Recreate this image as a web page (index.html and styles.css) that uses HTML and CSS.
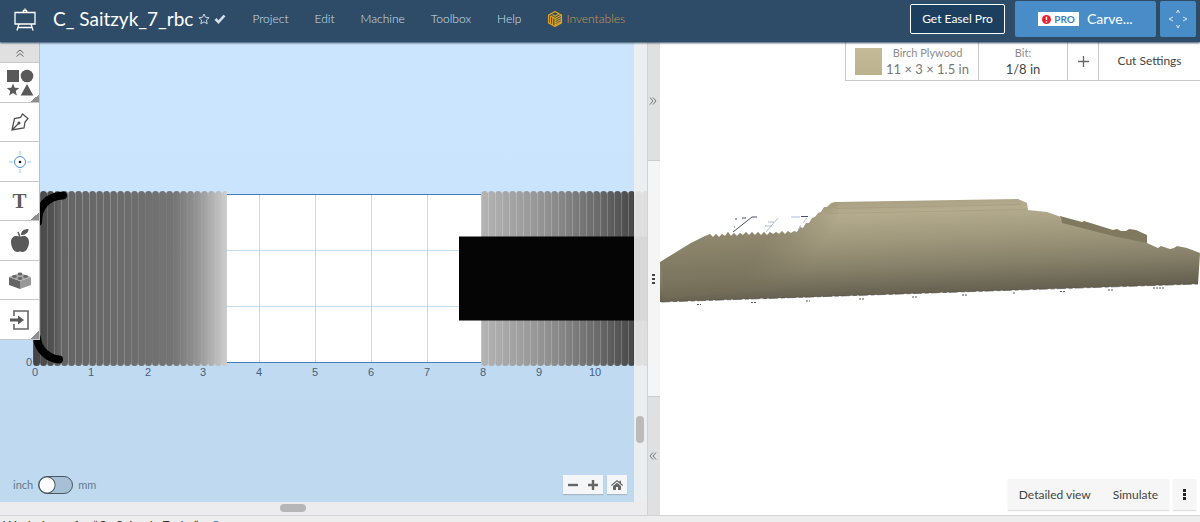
FILE: index.html
```html
<!DOCTYPE html>
<html lang="en">
<head>
<meta charset="utf-8">
<title>Easel</title>
<link rel="stylesheet" href="styles.css">
</head>
<body>
<header class="topbar">
  <svg class="logo" width="24" height="24" viewBox="0 0 24 24" aria-label="Easel"><path d="M2 4.500h20v11.500H2zM10 4.500l.5-2h3l.5 2M12 .5v2M6 16l-2 6.500M18 16l2 6.500M5 19.500h14"/></svg>
  <h1 class="title">C_ Saitzyk_7_rbc</h1>
  <button class="plain" aria-label="Favourite"><svg width="12" height="12" viewBox="0 0 12 12"><path class="star" d="M6 1l1.500 3.300 3.600.4-2.700 2.400.8 3.600L6 8.900l-3.200 1.800.8-3.600L.9 4.700l3.600-.4z"/></svg></button>
  <svg class="saved" width="12" height="12" viewBox="0 0 12 12" aria-hidden="true"><path d="M1.500 6l3 3.200L10.500 2.500"/></svg>
  <nav class="menu">
    <a href="#">Project</a>
    <a href="#">Edit</a>
    <a href="#">Machine</a>
    <a href="#">Toolbox</a>
    <a href="#">Help</a>
    <a href="#" class="brand"><svg width="16" height="16" viewBox="0 0 16 16"><path d="M8 .5l6.500 3.700v7.600L8 15.500l-6.500-3.700V4.200zM8 8v7.500M3.500 5v7.500M5.700 6v7.500M3.500 4.700L8 7.500l6.500-3.600M5.500 3.500L8 5.200l4-2.400M8 9.800l6-3.300M8 12l6-3.300M8 14l6-3.300"/></svg><span>Inventables</span></a>
  </nav>
  <button class="get-pro">Get Easel Pro</button>
  <button class="carve"><span class="pro"><svg width="9" height="9" viewBox="0 0 9 9"><circle cx="4.500" cy="4.500" r="4.500" fill="#e8232b"/><path d="M4.500 1.800v3.200M4.500 6.200v1.300" stroke="#fff" stroke-width="1.400"/></svg>PRO</span>Carve...</button>
  <button class="jog" aria-label="Jog machine"><svg width="20" height="20" viewBox="0 0 20 20"><path d="M8.500 4L10 1l1.500 3M8.500 16l1.500 3 1.500-3M5 8l-4 2 4 2M15 8l4 2-4 2"/></svg></button>
</header>

<main class="workspace">
  <section class="design">
    <svg class="canvas" viewBox="0 42 647 473" preserveAspectRatio="xMinYMin slice">
      <defs>
        <linearGradient id="sky" x1="0" y1="0" x2="0" y2="1"><stop offset="0" stop-color="#cce5fe"/><stop offset=".35" stop-color="#cae4fd"/><stop offset=".65" stop-color="#bfdaf2"/><stop offset="1" stop-color="#bfd9ef"/></linearGradient>
        <linearGradient id="toneLeft" gradientUnits="userSpaceOnUse" x1="33" x2="227" y1="0" y2="0"><stop offset="0" stop-color="#444"/><stop offset=".1" stop-color="#525252"/><stop offset=".14" stop-color="#646464"/><stop offset=".45" stop-color="#6b6b6b"/><stop offset=".72" stop-color="#747474"/><stop offset=".84" stop-color="#929292"/><stop offset="1" stop-color="#cecece"/></linearGradient>
        <linearGradient id="toneRight" gradientUnits="userSpaceOnUse" x1="481" x2="646" y1="0" y2="0"><stop offset="0" stop-color="#b4b4b4"/><stop offset=".4" stop-color="#919191"/><stop offset=".7" stop-color="#6b6b6b"/><stop offset=".92" stop-color="#494949"/></linearGradient>
        <linearGradient id="seamFade" gradientUnits="userSpaceOnUse" x1="33" x2="227" y1="0" y2="0"><stop offset="0" stop-color="#fff" stop-opacity=".1"/><stop offset=".2" stop-color="#fff" stop-opacity=".25"/><stop offset=".45" stop-color="#fff" stop-opacity=".2"/><stop offset=".6" stop-color="#fff" stop-opacity=".04"/><stop offset="1" stop-color="#fff" stop-opacity=".06"/></linearGradient>
        <pattern id="capsLeft" patternUnits="userSpaceOnUse" x="33" y="191" width="7" height="175"><rect width="7" height="175" rx="3.500" fill="#fff"/><rect y="3" width="7" height="169" fill="#fff"/></pattern>
        <pattern id="capsRight" patternUnits="userSpaceOnUse" x="481" y="191" width="7" height="175"><rect width="7" height="175" rx="3.500" fill="#fff"/><rect y="3" width="7" height="169" fill="#fff"/></pattern>
        <pattern id="seamLines" patternUnits="userSpaceOnUse" x="33" y="193" width="7" height="171"><rect width="1" height="171" fill="#fff"/></pattern>
        <pattern id="seamRight" patternUnits="userSpaceOnUse" x="481" y="193" width="7" height="171"><rect width="1" height="171" fill="#fff" fill-opacity=".2"/></pattern>
        <mask id="maskLeft"><rect x="33" y="191" width="194" height="175" fill="url(#capsLeft)"/></mask>
        <mask id="maskRight"><rect x="481" y="191" width="166" height="175" fill="url(#capsRight)"/></mask>
        <mask id="maskSeams"><rect x="33" y="193" width="194" height="171" fill="url(#seamLines)"/></mask>
      </defs>
      <rect y="42" width="647" height="473" fill="url(#sky)"/>
      <rect x="35" y="194" width="612" height="168" fill="#fff"/>
      <path d="M259.500 195v167M315.500 195v167M371.500 195v167M427.500 195v167M227 250.500h254M227 306.500h254" stroke="#c3dbeb"/>
      <path d="M35 194.500h612M35 362.500h612" stroke="#427fb5"/>
      <rect x="33" y="191" width="194" height="175" fill="url(#toneLeft)" mask="url(#maskLeft)"/>
      <rect x="33" y="193" width="194" height="171" fill="url(#seamFade)" mask="url(#maskSeams)"/>
      <rect x="481" y="191" width="166" height="175" fill="url(#toneRight)" mask="url(#maskRight)"/>
      <rect x="481" y="193" width="166" height="171" fill="url(#seamRight)"/>
      <path d="M63 195.500C48 196 38 206 38 222M37 338C38 349 48 359 59 359.500" fill="none" stroke="#000" stroke-width="8" stroke-linecap="round"/>
      <rect x="459" y="236.500" width="188" height="84" fill="#050505"/>
      <g class="ticks">
        <text x="29" y="366">0</text><text x="35" y="376">0</text><text x="91" y="376">1</text><text x="148" y="376">2</text><text x="203" y="376">3</text><text x="259" y="376">4</text><text x="315" y="376">5</text><text x="371" y="376">6</text><text x="427" y="376">7</text><text x="483" y="376">8</text><text x="539" y="376">9</text><text x="595" y="376">10</text>
      </g>
    </svg>
    <div class="scroll-v"><span class="thumb-v"></span></div>
    <div class="scroll-h"><span class="thumb-h"></span></div>
    <div class="tools">
      <button class="collapse" aria-label="Collapse tools"><svg width="8" height="8" viewBox="0 0 8 8"><path d="M.5 4L4 1l3.500 3M.5 7.500L4 4.500l3.500 3" fill="none" stroke="#666"/></svg></button>
      <button class="more" aria-label="Shapes"><svg width="28" height="28" viewBox="0 0 28 28" fill="#595959"><path d="M1 1h12v12H1z"/><circle cx="21" cy="7" r="6.300"/><path d="M7 14.500l1.700 4.300 4.500.3-3.500 2.900 1.200 4.500L7 24l-3.900 2.500L4.300 22 .8 19.100l4.500-.3zM21 15l6.300 11.500H14.700z"/></svg></button>
      <button aria-label="Pen"><svg width="20" height="20" viewBox="0 0 20 20" fill="none" stroke="#505050" stroke-width="1.300"><path d="M2 18L4.500 6.500l6-1L12.500 2l5.500 4.500-3 3.500-1 6zM2 18l6.500-6.500"/><circle cx="9" cy="11" r="1.500" fill="#505050" stroke="none"/></svg></button>
      <button aria-label="Drill point"><svg width="22" height="22" viewBox="0 0 22 22" fill="none"><path d="M11 0v4M11 18v4M0 11h4M18 11h4" stroke="#9cc6ee"/><circle cx="11" cy="11" r="5.500" stroke="#4a90dc"/><circle cx="11" cy="11" r="1.300" fill="#111"/></svg></button>
      <button class="more text-tool" aria-label="Text">T</button>
      <button aria-label="Clip art"><svg width="22" height="26" viewBox="0 0 22 26" fill="#595959"><path d="M11 9c3-2 9-1.500 9 5 0 5-3 10-6.500 10-1 0-1.500-.5-2.500-.5s-1.500.5-2.500.5C5 24 2 19 2 14c0-6.500 6-7 9-5z"/><path d="M12 7c0-4 3-6 7.500-6C19.500 5 16 7 12 7z"/><path d="M11 9L9 4" stroke="#595959" stroke-width="1.500"/></svg></button>
      <button aria-label="Apps"><svg width="24" height="20" viewBox="0 0 24 20"><path d="M1 7l11 4v8L1 15z" fill="#656565"/><path d="M12 11l11-4v8l-11 4z" fill="#989898"/><path d="M1 7l11-4 11 4-11 4z" fill="#aaa"/><g fill="#666"><ellipse cx="6.500" cy="6.500" rx="2.400" ry="1.400"/><ellipse cx="12" cy="4" rx="2.400" ry="1.400"/><ellipse cx="17.500" cy="6.500" rx="2.400" ry="1.400"/><ellipse cx="12" cy="8.500" rx="2.400" ry="1.400"/></g></svg></button>
      <button class="more" aria-label="Import"><svg width="20" height="20" viewBox="0 0 20 20"><path d="M4 6V1h14v18H4v-5" fill="none" stroke="#666" stroke-width="1.600"/><path d="M0 8.500h8V5.500l6 4.500-6 4.500v-3H0z" fill="#595959"/></svg></button>
    </div>
    <label class="units"><span>inch</span><input type="checkbox" role="switch" aria-label="Use millimetres"><span>mm</span></label>
    <div class="zoom">
      <div class="zoom-pair">
        <button aria-label="Zoom out"><svg width="10" height="10" viewBox="0 0 10 10"><path d="M0 5h10" stroke="#666" stroke-width="2.400"/></svg></button>
        <button aria-label="Zoom in"><svg width="10" height="10" viewBox="0 0 10 10"><path d="M0 5h10M5 0v10" stroke="#666" stroke-width="2.400"/></svg></button>
      </div>
      <button class="home" aria-label="Reset view"><svg width="12" height="10" viewBox="0 0 12 10" fill="#666"><path d="M6 0l2.500 2V.8H10v2.500L12 5l-.7.9L6 1.600.7 5.900 0 5z"/><path d="M6 2.700l4 3.300v4H7V7H5v3H2V6z"/></svg></button>
    </div>
  </section>

  <div class="divider">
    <button class="shade" aria-label="Expand design"><svg width="8" height="8" viewBox="0 0 8 8"><path d="M1 .5L4 4 1 7.500M4 .5L7 4 4 7.500"/></svg></button>
    <button class="grip" aria-label="Resize"><svg width="3" height="10" viewBox="0 0 3 10" fill="#444"><path d="M0 0h3v2H0zM0 4h3v2H0zM0 8h3v2H0z"/></svg></button>
    <button class="shade" aria-label="Expand preview"><svg width="8" height="8" viewBox="0 0 8 8"><path d="M4 .5L1 4l3 3.500M7 .5L4 4l3 3.500"/></svg></button>
  </div>

  <section class="preview">
    <svg class="model" viewBox="660 42 540 473" preserveAspectRatio="xMidYMid meet">
      <defs>
        <linearGradient id="wood" gradientUnits="userSpaceOnUse" x1="900" y1="200" x2="904" y2="296"><stop offset="0" stop-color="#aaa084"/><stop offset=".12" stop-color="#b5ac8e"/><stop offset=".4" stop-color="#a1997d"/><stop offset=".7" stop-color="#868069"/><stop offset="1" stop-color="#635e4e"/></linearGradient>
        <linearGradient id="shadeLeft" gradientUnits="userSpaceOnUse" x1="770" y1="235" x2="812" y2="262"><stop offset="0" stop-color="#746d57" stop-opacity=".5"/><stop offset="1" stop-color="#746d57" stop-opacity="0"/></linearGradient>
        <clipPath id="outline"><path id="solid" d="M660 262L691 243L693 242L705 236L708 235L710 234L713 237L716 234L719 237L722 234L725 236L728 232L731 236L734 233L737 236L740 233L743 235L746 232L749 235L752 232L755 235L758 232L761 235L764 232L767 235L770 232L773 234L776 232L779 234L782 231L785 234L788 231L791 233L794 231L797 232L800 227L803 228L806 223L809 223L812 218L815 217L818 213L821 212L824 207L827 207L831 203L835 202L1018 199L1027 203L1028 210L1047 212L1061 217L1062 223L1117 237L1147 243L1158 248L1161 246L1170 249L1174 248L1177 246L1187 248L1200 253L1198 284L662 302L660 302Z"/></clipPath>
      </defs>
      <path d="M1060 216L1082 222L1084 221L1113 230L1117 229L1121 231L1126 231L1129 229L1136 230L1147 235L1147 244L1117 239L1060 224z" fill="#81795f"/>
      <use href="#solid" fill="url(#wood)"/>
      <g clip-path="url(#outline)">
        <path d="M660 262l47-30 93-5 20-16 18-10v85l-173 12z" fill="url(#shadeLeft)"/>
        <path d="M828 213.500l198-4M836 208.500l185-4" stroke="#9b9277" stroke-opacity=".4"/>
      </g>
      <path d="M661 302l537-18" stroke="#45433f" stroke-opacity=".8" stroke-width=".8" stroke-dasharray="9 3 4 2"/>
      <path d="M733 232l19-15h5M734 227h1M735 219h2M742 218h4" stroke="#48536e" fill="none"/>
      <path d="M766 232l12-14M768 222h6M765 226h7M791 217h9M803 223l4-5M798 230l3-5" stroke="#a9bfd7" fill="none"/>
      <path d="M801 216.500h7" stroke="#45526f"/>
      <path d="M697 304.500h4M751 302.500h5M806 301h4M859 299h5M912 297h5M962 295h5M1013 293h2M1060 291.500h6M1108 290h6M1153 288h11" stroke="#535b6c" stroke-dasharray="2 1"/>
    </svg>
    <div class="material">
      <button class="stock"><span class="swatch"></span><span class="pair"><span class="small">Birch Plywood</span><span class="big">11 × 3 × 1.5 in</span></span></button>
      <button class="bit"><span class="small">Bit:</span><span class="big dark">1/8 in</span></button>
      <button class="add" aria-label="Add bit"><svg width="11" height="11" viewBox="0 0 11 11"><path d="M0 5.500h11M5.500 0v11" stroke="#666" stroke-width="1.300"/></svg></button>
      <button class="cut">Cut Settings</button>
    </div>
    <div class="actions">
      <div class="views"><button>Detailed view</button><button>Simulate</button></div>
      <button class="dots" aria-label="More options"><svg width="3" height="11" viewBox="0 0 3 11" fill="#222"><path d="M0 0h3v3H0zM0 4h3v3H0zM0 8h3v3H0z"/></svg></button>
    </div>
  </section>
</main>
<footer class="pieces"><span>Workpieces for “C_ Saitzyk_7_rbc”</span><span class="info"></span></footer>
</body>
</html>
```
FILE: styles.css
```css
* { box-sizing: border-box; }
body {
  margin: 0;
  height: 100vh;
  overflow: hidden;
  display: flex;
  flex-direction: column;
  background: #ededed;
  font: 12px/16px Lato, "Open Sans", sans-serif;
  color: #444;
}
button {
  margin: 0;
  padding: 0;
  border: 0;
  background: none;
  font: inherit;
  color: inherit;
  display: flex;
  align-items: center;
  justify-content: center;
}
svg { display: block; flex: none; }

.topbar {
  flex: 0 0 42px;
  display: flex;
  align-items: center;
  padding-bottom: 4px;
  padding-right: 4px;
  background: #2e4c67;
  box-shadow: 0 1px 2px #30495f;
  position: relative;
  z-index: 2;
  color: #fff;
}
.logo { margin: 1px 16px 0 13px; fill: none; stroke: #fff; stroke-width: 1.3; }
.title { margin: 0; font-size: 19px; line-height: 24px; font-weight: 400; white-space: nowrap; }
.plain { margin-left: 5px; }
.star { fill: none; stroke: #cbd8e4; }
.saved { margin-left: 4px; fill: none; stroke: #d6e0ea; stroke-width: 2.6; }
.menu { display: flex; gap: 26px; margin-left: 26px; }
.menu a { color: #d3e0ec; font-weight: 300; text-decoration: none; }
.menu .brand { display: flex; gap: 3px; color: #cf9a50; }
.brand svg { fill: none; stroke: #e0a21b; stroke-width: 1.2; }
.get-pro {
  margin-left: auto;
  width: 95px;
  height: 30px;
  border: 1px solid #fff;
  border-radius: 2px;
  background: #1c3f60;
}
.carve {
  margin: 0 4px 0 10px;
  width: 141px;
  height: 36px;
  gap: 8px;
  border-radius: 2px;
  background: #488dc8;
  font-size: 14px;
}
.pro {
  display: flex;
  align-items: center;
  gap: 3px;
  padding: 0 4px;
  height: 14px;
  background: #fff;
  color: #3d83bd;
  font-size: 10px;
  font-weight: 700;
}
.jog { width: 36px; height: 36px; border-radius: 2px; background: #488dc8; }
.jog path { fill: none; stroke: #d5e6f5; }

.workspace { flex: 0 0 calc(100vh - 49px); display: flex; }
.workspace + .pieces { border-top: 1px solid #d4d4d6; }
.design {
  flex: 647 1 0;
  min-width: 0;
  position: relative;
  display: grid;
  grid-template: minmax(0, 1fr) 13px / minmax(0, 1fr) 13px;
}
.canvas { grid-area: 1 / 1 / 3 / 3; width: 100%; height: 100%; }
.ticks { font: 11px "Liberation Sans", sans-serif; fill: #46617a; text-anchor: middle; }
.scroll-v { grid-area: 1 / 2 / 2 / 3; z-index: 1; background: rgb(240 240 240 / 90%); padding: 374px 3px 0 2px; }
.scroll-h { grid-area: 2 / 1 / 3 / 3; z-index: 1; background: #ececee; padding: 2px 0 0 280px; }
.thumb-v { display: block; width: 8px; height: 27px; border-radius: 4px; background: #bbb; }
.thumb-h { display: block; width: 26px; height: 8px; border-radius: 4px; background: #b6b6b8; }

.tools {
  position: absolute;
  top: 1px;
  left: 0;
  width: 40px;
  display: grid;
  grid-template-rows: 20px 40px 39px 40px 39px 40px 39px 40px;
  background: #fff;
  border-right: 1px solid #b9c0c6;
  z-index: 1;
}
.tools button { position: relative; border-bottom: 1px solid #c4c8cb; }
.tools .collapse { background: #e0e0e0; }
.tools .more::after {
  content: "";
  position: absolute;
  right: 0;
  bottom: 0;
  width: 8px;
  height: 8px;
  background: linear-gradient(135deg, transparent 50%, #8e8e8e 50%);
}
.tools .text-tool { font: bold 21px/24px "Liberation Serif", serif; color: #5c5c5c; }

.units {
  position: absolute;
  left: 13px;
  bottom: 21px;
  display: flex;
  align-items: center;
  gap: 5px;
  font-size: 11px;
  color: #657b8d;
}
.units input {
  appearance: none;
  margin: 0;
  width: 35px;
  height: 18px;
  border: 1px solid #4a5660;
  border-radius: 9px;
  background: radial-gradient(circle at 8px 8px, #fff 7px, #4a5660 8px, transparent 9px), #a6c0d6;
}
.zoom { position: absolute; right: 20px; bottom: 21px; display: flex; gap: 4px; }
.zoom-pair { display: flex; background: #f5f6f7; box-shadow: 0 1px 1px #a5b6c5; }
.zoom button { width: 20px; height: 19px; background: #f5f6f7; }
.zoom .home { box-shadow: 0 1px 1px #a5b6c5; }

.divider {
  flex: 0 0 13px;
  display: grid;
  grid-template-rows: 118fr 237fr 118fr;
  background: #f5f5f6;
}
.divider button { padding-right: 2px; border-left: 1px solid #d2d2d4; }
.divider .shade { background: #e0e0e1; }
.shade path { fill: none; stroke: #777; }
.divider .grip { border-top: 1px solid #ccc; border-bottom: 1px solid #ccc; }

.preview { flex: 540 1 0; min-width: 0; position: relative; background: #fff; }
.model { width: 100%; height: 100%; }
.material {
  position: absolute;
  top: 0;
  right: 0;
  display: flex;
  height: 39px;
  border: solid #c8c8c8;
  border-width: 0 0 1px 1px;
  background: #fff;
}
.material button + button { border-left: 1px solid #c8c8c8; }
.stock { width: 132px; gap: 4px; }
.swatch { width: 27px; height: 27px; background: linear-gradient(#c6bb98, #bcb18e); }
.pair, .bit { display: flex; flex-direction: column; align-items: center; }
.small { font-size: 11px; line-height: 16px; color: #8b8b8b; white-space: nowrap; }
.big { font-size: 13px; line-height: 16px; color: #777; white-space: nowrap; }
.dark { color: #444; }
.bit { width: 89px; }
.add { width: 31px; }
.cut { width: 102px; }
.actions { position: absolute; right: 4px; bottom: 5px; display: flex; gap: 4px; }
.actions button { height: 31px; background: #f6f6f6; }
.views { display: flex; box-shadow: 0 1px 1px #ddd; }
.views button { padding: 0 11px; }
.actions .dots { width: 23px; box-shadow: 0 1px 1px #ddd; }

.pieces { flex: none; display: flex; gap: 12px; padding: 2px 3px; font-size: 13px; color: #333; }
.info { width: 10px; height: 10px; margin-top: 3px; border-radius: 50%; background: #3d83bd; }
```
